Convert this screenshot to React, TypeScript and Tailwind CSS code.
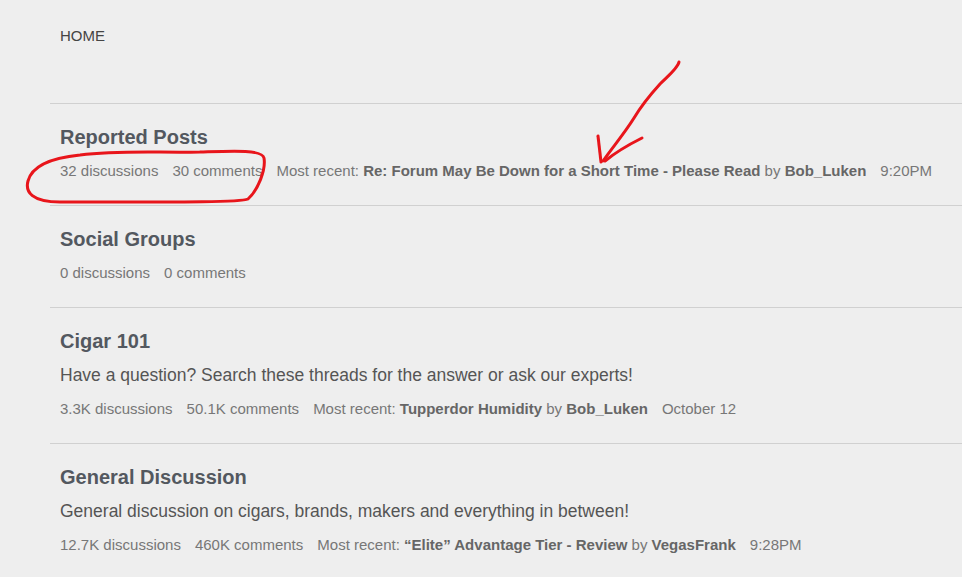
import React from "react";

type Cat = {
	title: string;
	desc?: string;
	discussions: string;
	comments: string;
	recent?: { title: string; by: string; when: string };
};

const cats: Cat[] = [
	{
		title: "Reported Posts",
		discussions: "32 discussions",
		comments: "30 comments",
		recent: {
			title: "Re: Forum May Be Down for a Short Time - Please Read",
			by: "Bob_Luken",
			when: "9:20PM",
		},
	},
	{ title: "Social Groups", discussions: "0 discussions", comments: "0 comments" },
	{
		title: "Cigar 101",
		desc: "Have a question? Search these threads for the answer or ask our experts!",
		discussions: "3.3K discussions",
		comments: "50.1K comments",
		recent: { title: "Tupperdor Humidity", by: "Bob_Luken", when: "October 12" },
	},
	{
		title: "General Discussion",
		desc: "General discussion on cigars, brands, makers and everything in between!",
		discussions: "12.7K discussions",
		comments: "460K comments",
		recent: { title: "\u201cElite\u201d Advantage Tier - Review", by: "VegasFrank", when: "9:28PM" },
	},
];

function Category({ c }: { c: Cat }) {
	return (
		<div className="border-t border-[#d0d0d0] pl-[10px] pt-[16px] pb-[17px]">
			<div className="h-[34px] flex items-center text-[20px] font-bold text-[#53585f]">{c.title}</div>
			{c.desc && (
				<div className="h-[34px] flex items-center text-[17.5px] text-[#555]">{c.desc}</div>
			)}
			<div className="h-[34px] flex items-center gap-[14px] text-[15px] text-[#777]">
				<span>{c.discussions}</span>
				<span>{c.comments}</span>
				{c.recent && (
					<span>
						Most recent: <b className="text-[#666]">{c.recent.title}</b> by{" "}
						<b className="text-[#666]">{c.recent.by}</b>
					</span>
				)}
				{c.recent && <span>{c.recent.when}</span>}
			</div>
		</div>
	);
}

export default function App() {
	return (
		<div
			className="relative min-h-screen bg-[#eeeeee] pl-[50px]"
			style={{ fontFamily: '"Liberation Sans", Arial, sans-serif' }}
		>
			<div className="h-[103px] pl-[10px] pt-[27px] text-[15px] leading-[18px] text-[#444]">HOME</div>
			{cats.map((c) => (
				<Category key={c.title} c={c} />
			))}

			{/* red markup */}
			<svg
				className="absolute left-0 top-0 pointer-events-none"
				width="962"
				height="577"
				fill="none"
				stroke="#e8151b"
				strokeWidth="3"
				strokeLinecap="round"
				strokeLinejoin="round"
			>
				<path d="M200 152 C230 151 262 149 264 158 C266 170 258 190 248 199 C240 203 150 202 60 202 C32 202 25 192 28 181 C32 166 50 158 80 155 C120 150 160 153 200 152" />
				<path d="M679 62 C678 68 668 76 660 84 C650 95 640 108 634 118 C624 134 612 148 603 161" />
				<path d="M598 136 C599 145 600 154 601 162" />
				<path d="M642 138 C630 144 616 152 605 161" />
			</svg>
		</div>
	);
}
